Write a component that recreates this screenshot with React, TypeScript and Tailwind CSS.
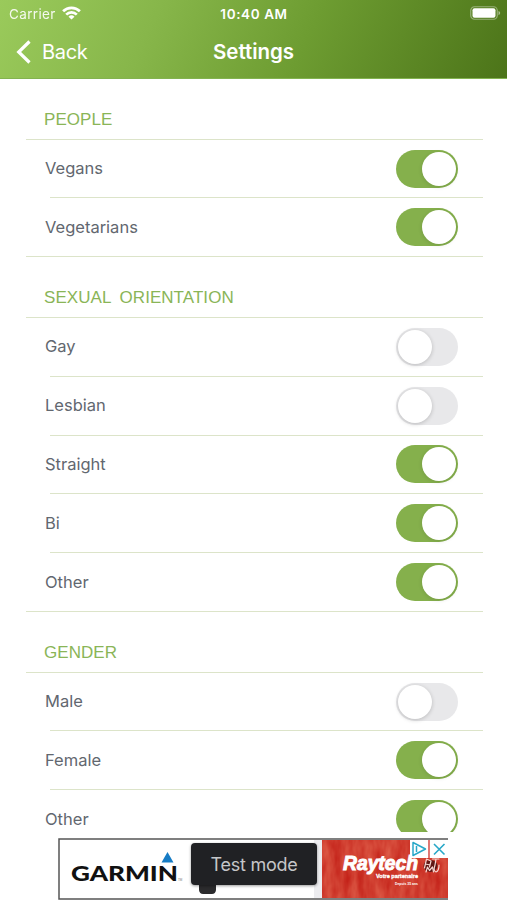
import clsx from "clsx";
import React from "react";

type Option = { label: string; enabled: boolean };

const sections: { title: string; options: Option[] }[] = [
  {
    title: "PEOPLE",
    options: [
      { label: "Vegans", enabled: true },
      { label: "Vegetarians", enabled: true },
    ],
  },
  {
    title: "SEXUAL ORIENTATION",
    options: [
      { label: "Gay", enabled: false },
      { label: "Lesbian", enabled: false },
      { label: "Straight", enabled: true },
      { label: "Bi", enabled: true },
      { label: "Other", enabled: true },
    ],
  },
  {
    title: "GENDER",
    options: [
      { label: "Male", enabled: false },
      { label: "Female", enabled: true },
      { label: "Other", enabled: true },
    ],
  },
];

function StatusBar() {
  return (
    <div className="grid h-7 grid-cols-3 items-center pr-[6px] pl-[9px] text-[13.5px] text-white">
      <div className="flex items-center gap-[6px]">
        <span className="tracking-[0.35px] opacity-90">Carrier</span>
        <svg className="-mt-[2px]" width="19" height="14" viewBox="0 0 19 14" fill="none" stroke="white" strokeWidth="2.7">
          <path d="M1.1 5.3a11.9 11.9 0 0 1 16.8 0" />
          <path d="M4.2 8.6a7.5 7.5 0 0 1 10.6 0" />
          <path d="M9.5 13.6 6.5 10.7a4.3 4.3 0 0 1 6 0Z" fill="white" stroke="none" />
        </svg>
      </div>
      <span className="-ml-[2px] text-center font-semibold tracking-[0.6px] whitespace-nowrap">10:40 AM</span>
      <svg className="-mt-[2px] justify-self-end" width="31" height="14" viewBox="0 0 31 14">
        <rect x="0.75" y="0.75" width="26.5" height="12.5" rx="3.7" fill="none" stroke="white" strokeOpacity="0.4" strokeWidth="1.2" />
        <rect x="2.5" y="2.3" width="23" height="9.4" rx="2" fill="white" />
        <path d="M28.5 5v4.2q1.7-.5 1.7-2.1T28.5 5Z" fill="white" fillOpacity="0.5" />
      </svg>
    </div>
  );
}

function Header() {
  return (
    <header className="h-[79px] shrink-0 border-b border-[#83b350] bg-[linear-gradient(115deg,#9aca5b_0%,#87b64a_30%,#6d9c31_60%,#4c7419_100%)]">
      <StatusBar />
      <div className="grid h-[48px] grid-cols-3 items-center pl-[16px] text-white">
        <button className="flex items-center gap-[11px] text-[20px] tracking-[-0.3px]">
          <svg width="15" height="24" viewBox="0 0 15 24" fill="none" stroke="white" strokeWidth="3.2">
            <path d="M13.5 1.5 2.7 12 13.5 22.5" />
          </svg>
          Back
        </button>
        <h1 className="-ml-[16px] text-center text-[20.5px] font-semibold tracking-[-0.05px]">Settings</h1>
      </div>
    </header>
  );
}

function Toggle({ enabled }: { enabled: boolean }) {
  return (
    <button
      role="switch"
      aria-checked={enabled}
      className={clsx(
        "mr-[0.8px] flex h-[38px] w-[62.5px] items-center rounded-full px-[2px]",
        enabled ? "justify-end bg-[#85b04c]" : "justify-start bg-[#e8e8ea]",
      )}
    >
      <span
        className={clsx(
          "size-[34px] rounded-full bg-white",
          enabled ? "shadow-[0_1px_4px_rgba(0,0,0,0.12)]" : "shadow-[0_1px_4px_rgba(0,0,0,0.2)]",
        )}
      />
    </button>
  );
}

function Section({ title, options }: { title: string; options: Option[] }) {
  return (
    <section>
      <h2 className="flex h-[60.4px] items-end border-b border-[#dce4c9] pb-[9px] pl-[18px] font-['Liberation_Sans',sans-serif] text-[17px] leading-[20px] tracking-[0.05px] text-[#8ab557] [word-spacing:4px]">
        {title}
      </h2>
      {options.map((option, index) => (
        <div
          key={option.label}
          className={clsx(
            "flex h-[58.9px] items-stretch",
            index === options.length - 1 && "border-b border-[#dce4c9]",
          )}
        >
          <div
            className={clsx(
              "ml-6 flex flex-1 items-center justify-between pr-6",
              index < options.length - 1 && "border-b border-[#dce4c9]",
            )}
          >
            <span className="-ml-[5px] text-[16.5px] text-[#62676f]">{option.label}</span>
            <Toggle enabled={option.enabled} />
          </div>
        </div>
      ))}
    </section>
  );
}

function AdBanner() {
  return (
    <aside className="relative mt-[6px] ml-[58px] h-[62px] w-[390px] shrink-0 font-['Liberation_Sans',sans-serif]">
      <svg className="block" width="390" height="62" viewBox="0 0 390 62">
        <defs>
          <filter id="grain" x="0" y="0" width="100%" height="100%">
            <feTurbulence type="fractalNoise" baseFrequency="0.12 0.04" numOctaves="3" seed="4" />
            <feColorMatrix values="0 0 0 0 0.84  0 0 0 0 0.2  0 0 0 0 0.12  0.8 0 0 0 -0.1" />
          </filter>
        </defs>
        <rect x="0.75" y="1" width="389" height="60" fill="white" />
        <rect x="256" y="2" width="8" height="58" fill="#ededf0" />
        <rect x="264" y="2" width="126" height="58" fill="#c4231a" />
        <rect x="264" y="2" width="126" height="58" filter="url(#grain)" />
        <path d="M390 1H1v60h389" fill="none" stroke="#555" strokeWidth="1.5" />
        <path d="M103.5 24.5 109.5 14 115.5 24.5Z" fill="#167cc5" />
        <text x="13" y="42.5" textLength="107" lengthAdjust="spacingAndGlyphs" fontFamily="Lato, sans-serif" fontWeight="900" fontSize="21.5" fill="#111">
          GARMIN
        </text>
        <text x="120" y="42.5" fontSize="3" fill="#777">TM</text>
        <path d="M141 47h17v5q-.5 4-4 4h-9q-3.5 0-4-4Z" fill="#2b2b2d" />
        <text x="285" y="32" textLength="75" lengthAdjust="spacingAndGlyphs" fontWeight="700" fontStyle="italic" fontSize="20.5" fill="white" stroke="white" strokeWidth="1">
          Raytech
        </text>
        <text x="318" y="40" textLength="42" lengthAdjust="spacingAndGlyphs" fontWeight="700" fontSize="6.2" fill="white" stroke="white" strokeWidth="0.3">
          Votre partenaire
        </text>
        <text x="337" y="46.5" textLength="23" lengthAdjust="spacingAndGlyphs" fontWeight="700" fontSize="4" fill="white">
          Depuis 35 ans
        </text>
        <g fill="none" strokeLinecap="round" strokeLinejoin="round">
          <ellipse cx="372.5" cy="28" rx="7" ry="6" fill="#5e1714" />
          <path d="M366.5 30l2-9 4.5 2-1.5 6M367.5 26l4.5 1M374.5 21h6.5M378 21l-1 6M368 34l1.5-5 2 3.5 3-3.5 1 5M377 27q-2 6 1 7 3-1 3-7" stroke="#f5d9d4" strokeWidth="1.2" />
        </g>
        <rect x="352" y="2" width="38" height="18" fill="white" />
        <path d="M371 2v18" stroke="#d0302a" strokeWidth="1.3" />
        <path d="M355 4.5v13l12.5-6.5ZM358.5 8v6" fill="none" stroke="#28a8c8" strokeWidth="1.5" strokeLinejoin="round" />
        <path d="M376 6l10.5 10.5M386.5 6 376 16.5" stroke="#28a8c8" strokeWidth="1.6" />
      </svg>
      <div className="absolute top-[5px] left-[133px] flex h-[42px] w-[126px] items-center justify-center rounded-[4px] bg-[#202124] font-['Inter',sans-serif] text-[18px] tracking-[-0.25px] text-[#c5c6c8] shadow-[0_1px_3px_rgba(0,0,0,0.4)]">
        Test mode
      </div>
    </aside>
  );
}

export default function App() {
  return (
    <div className="flex h-[900px] w-[507px] flex-col overflow-hidden bg-white font-['Inter',sans-serif]">
      <Header />
      <main className="h-[753px] shrink-0 overflow-hidden pt-[0.2px] pr-6 pl-[26px]">
        {sections.map((section) => (
          <Section key={section.title} {...section} />
        ))}
      </main>
      <AdBanner />
    </div>
  );
}
